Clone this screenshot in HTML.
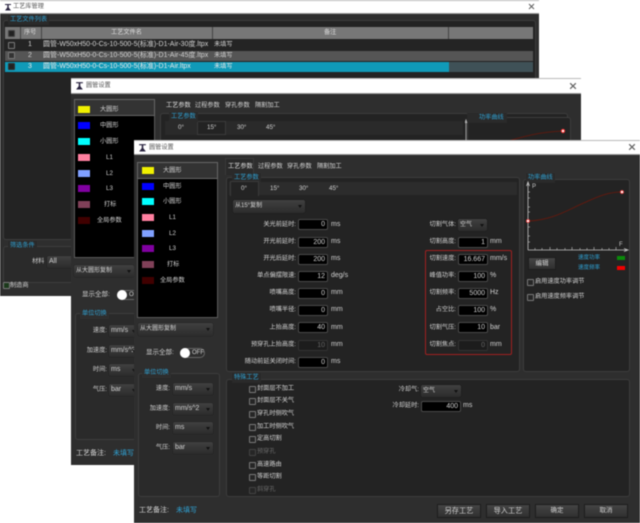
<!DOCTYPE html>
<html lang="zh">
<head>
<meta charset="utf-8">
<title>工艺库管理</title>
<style>
html,body{margin:0;padding:0;background:#fff;width:640px;height:523px;overflow:hidden}
#r{position:relative;width:640px;height:523px;overflow:hidden;background:#fff;font-family:"Liberation Sans","Noto Sans CJK SC",sans-serif;font-size:6.2px;color:#d2d2d2;filter:blur(.5px)}
#r div,#r span,#r svg{position:absolute;box-sizing:border-box}
.t{height:10px;line-height:10px;white-space:nowrap}
.u{font-size:7px}
.c{color:#2f9fd0}
.d{color:#6a6a6a}
.w{background:#2e2e2e}
.tb{background:#fff;border-top:1px solid #bbb;border-bottom:1px solid #999;color:#444}
.g{border:1px solid #3d3d3d;border-radius:3px;background:#232323}
.gt{background:#2a2a2a;color:#2f9fd0;height:10px;line-height:10px;padding:0 2px;white-space:nowrap}
.i{background:#000;border:1px solid #4a4a4a;border-radius:2px;height:11px;line-height:9px;text-align:right;padding-right:2px;color:#d2d2d2;font-size:7px}
.i.x{background:#1c1c1c;color:#666;border-color:#333}
.cb{background:linear-gradient(#404040,#2c2c2c);border-radius:2px;height:12px;line-height:12px;padding-left:2px;color:#d2d2d2;box-shadow:0 0 1px #111;white-space:nowrap;overflow:hidden;font-size:7px}
.cb.z{font-size:6px}
.cb:after{content:"";position:absolute;right:3px;top:5px;border:2px solid transparent;border-top:3px solid #111}
.b{background:linear-gradient(#444,#303030);border:1px solid #1d1d1d;height:14px;line-height:12px;text-align:center;color:#d2d2d2;font-size:7.2px}
.k{width:7px;height:7px;border:1px solid #7a7a7a;border-radius:1px;background:#262626}
.k.x{border-color:#444}
.s{width:12px;height:7px}
.l{background:#000;border:1px solid #5a5a5a}
</style>
</head>
<body>
<div id="r">

<!-- window 1 -->
<div class="w" style="left:0;top:0;width:539px;height:296px"></div>
<div class="tb" style="left:0;top:0;width:539px;height:14px"></div>
<svg style="left:4px;top:3px" width="8" height="8" viewBox="0 0 8 8"><path d="M1 1H7V2H4.7V4.500L7 7.500H1L3.300 4.500V2H1Z" fill="#2a2440"/></svg>
<span class="t" style="left:13px;top:2px;color:#555">工艺库管理</span>
<svg style="left:528px;top:3px" width="7" height="7" viewBox="0 0 7 7"><path d="M1 1L6 6M6 1L1 6" stroke="#666" stroke-width="1.1"/></svg>
<div class="g" style="left:3px;top:20px;width:533px;height:220px"></div>
<div class="gt c" style="left:8px;top:15px">工艺文件列表</div>
<div style="left:5px;top:27px;width:528px;height:12px;background:#777"></div>
<div style="left:20px;top:27px;width:1px;height:12px;background:#444"></div>
<div style="left:41px;top:27px;width:1px;height:12px;background:#444"></div>
<div style="left:212px;top:27px;width:1px;height:12px;background:#444"></div>
<div style="left:448px;top:27px;width:1px;height:12px;background:#444"></div>
<div class="k" style="left:8px;top:30px;background:#222;border-color:#444"></div>
<span class="t" style="left:24px;top:28px;color:#ddd">序号</span>
<span class="t" style="left:111px;top:28px;color:#ddd">工艺文件名</span>
<span class="t" style="left:324px;top:28px;color:#ddd">备注</span>
<div style="left:5px;top:40px;width:528px;height:10px;background:#242424"></div>
<div style="left:5px;top:51px;width:528px;height:10px;background:#555"></div>
<div style="left:5px;top:62px;width:444px;height:10px;background:#109ab8"></div>
<div style="left:449px;top:62px;width:84px;height:10px;background:#3f5157"></div>
<div class="k" style="left:8px;top:42px"></div>
<div class="k" style="left:8px;top:52px;background:#333"></div>
<div class="k" style="left:8px;top:63px;background:#222;border-color:#333"></div>
<span class="t u" style="left:28px;top:40px">1</span>
<span class="t u" style="left:28px;top:51px">2</span>
<span class="t u" style="left:28px;top:62px;color:#e8e8e8">3</span>
<span class="t u" style="left:43px;top:40px">圆管-W50xH50-0-Cs-10-500-5(标准)-D1-Air-30度.ltpx</span>
<span class="t u" style="left:43px;top:51px">圆管-W50xH50-0-Cs-10-500-5(标准)-D1-Air-45度.ltpx</span>
<span class="t u" style="left:43px;top:62px;color:#e8e8e8">圆管-W50xH50-0-Cs-10-500-5(标准)-D1-Air.ltpx</span>
<span class="t" style="left:214px;top:40px">未填写</span>
<span class="t" style="left:214px;top:51px">未填写</span>
<span class="t" style="left:214px;top:62px;color:#e8e8e8">未填写</span>
<div class="g" style="left:3px;top:246px;width:533px;height:37px;background:#2a2a2a"></div>
<div class="gt c" style="left:8px;top:241px">筛选条件</div>
<span class="t" style="left:32px;top:257px">材料</span>
<div class="cb" style="left:47px;top:256px;width:40px">All</div>
<div class="k" style="left:3px;top:282px;background:#1c3a1c"></div>
<span class="t" style="left:10px;top:281px">制造商</span>

<!-- window 2 -->
<div class="w" style="left:71px;top:78px;width:510px;height:387px"></div>
<div class="tb" style="left:71px;top:78px;width:510px;height:16px"></div>
<svg style="left:75px;top:81px" width="9" height="9" viewBox="0 0 8 8"><path d="M1 1H7V2H4.7V4.500L7 7.500H1L3.300 4.500V2H1Z" fill="#2a2440"/></svg>
<span class="t" style="left:86px;top:81px;color:#555">圆管设置</span>
<svg style="left:569px;top:82px" width="8" height="8" viewBox="0 0 7 7"><path d="M1 1L6 6M6 1L1 6" stroke="#666" stroke-width="1.1"/></svg>
<div class="l" style="left:74px;top:99px;width:81px;height:159px"></div>
<div style="left:74px;top:99px;width:81px;height:17px;background:#333;border:1px solid #666"></div>
<div class="s" style="left:78px;top:106px;background:#f0f000"></div>
<div class="s" style="left:78px;top:122px;background:#0000ff"></div>
<div class="s" style="left:78px;top:138px;background:#00ffff"></div>
<div class="s" style="left:78px;top:154px;background:#ff80a0"></div>
<div class="s" style="left:78px;top:170px;background:#80a0ff"></div>
<div class="s" style="left:78px;top:185px;background:#8000a0"></div>
<div class="s" style="left:78px;top:201px;background:#804058"></div>
<div class="s" style="left:78px;top:217px;background:#400000"></div>
<span class="t" style="left:100px;top:105px">大圆形</span>
<span class="t" style="left:100px;top:121px">中圆形</span>
<span class="t" style="left:100px;top:137px">小圆形</span>
<span class="t" style="left:106px;top:153px">L1</span>
<span class="t" style="left:106px;top:169px">L2</span>
<span class="t" style="left:106px;top:184px">L3</span>
<span class="t" style="left:104px;top:200px">打标</span>
<span class="t" style="left:97px;top:216px">全局参数</span>
<div class="cb z" style="left:74px;top:265px;width:60px">从大圆形复制</div>
<span class="t" style="left:82px;top:290px;font-size:6.500px">显示全部:</span>
<div style="left:117px;top:290px;width:30px;height:10px;border:1px solid #666;border-radius:5px"></div>
<div style="left:117px;top:290px;width:10px;height:10px;background:#fff;border-radius:50%"></div>
<span class="t" style="left:129px;top:290px">OFF</span>
<div class="g" style="left:75px;top:313px;width:70px;height:127px;background:#2a2a2a"></div>
<div class="gt c" style="left:80px;top:309px;background:#2e2e2e">单位切换</div>
<span class="t" style="right:533px;top:326px">速度:</span>
<span class="t" style="right:533px;top:346px">加速度:</span>
<span class="t" style="right:533px;top:365px">时间:</span>
<span class="t" style="right:533px;top:385px">气压:</span>
<div class="cb" style="left:109px;top:325px;width:30px">mm/s</div>
<div class="cb" style="left:109px;top:345px;width:30px">mm/s^2</div>
<div class="cb" style="left:109px;top:364px;width:30px">ms</div>
<div class="cb" style="left:109px;top:384px;width:30px">bar</div>
<span class="t" style="left:76px;top:449px;font-size:7px">工艺备注:</span>
<span class="t c" style="left:113px;top:449px;font-size:7px">未填写</span>
<span class="t" style="left:166px;top:101px;color:#ddd">工艺参数</span>
<span class="t" style="left:195px;top:101px">过程参数</span>
<span class="t" style="left:225px;top:101px">穿孔参数</span>
<span class="t" style="left:255px;top:101px">隔割加工</span>
<div style="left:160px;top:113px;width:408px;height:400px;background:#232323;border:1px solid #3d3d3d;border-radius:3px"></div>
<div style="left:165px;top:121px;width:298px;height:14px;background:#2a2a2a"></div>
<div style="left:197px;top:121px;width:29px;height:14px;background:#232323;border:1px solid #3a3a3a"></div>
<div class="gt c" style="left:169px;top:112px;background:#2a2a2a">工艺参数</div>
<span class="t" style="left:178px;top:123px">0°</span>
<span class="t" style="left:207px;top:123px">15°</span>
<span class="t" style="left:237px;top:123px">30°</span>
<span class="t" style="left:266px;top:123px">45°</span>
<div style="left:467px;top:117px;width:104px;height:300px;border:1px solid #3d3d3d;border-radius:3px;background:#232323"></div>
<div class="gt c" style="left:467px;top:113px;background:#2a2a2a;padding:0 3px 0 12px">功率曲线</div>
<svg style="left:465px;top:118px" width="110" height="24" viewBox="0 0 110 24"><path d="M1 24V4M0 5L1 2L2 5" stroke="#c0c0c0" stroke-width=".8" fill="none"/><path d="M40 24C60 18 75 14 98 13" stroke="#5a1a10" stroke-width="1" fill="none"/><circle cx="98" cy="13" r="1.600" fill="#fff" stroke="#f33"/></svg>

<!-- window 3 -->
<div class="w" style="left:134px;top:140px;width:506px;height:383px"></div>
<div class="tb" style="left:134px;top:140px;width:506px;height:15px"></div>
<svg style="left:138px;top:143px" width="9" height="9" viewBox="0 0 8 8"><path d="M1 1H7V2H4.7V4.500L7 7.500H1L3.300 4.500V2H1Z" fill="#2a2440"/></svg>
<span class="t" style="left:149px;top:143px;color:#555">圆管设置</span>
<svg style="left:628px;top:143px" width="8" height="8" viewBox="0 0 7 7"><path d="M1 1L6 6M6 1L1 6" stroke="#666" stroke-width="1.1"/></svg>

<div class="l" style="left:137px;top:162px;width:81px;height:156px"></div>
<div style="left:137px;top:162px;width:81px;height:17px;background:#333;border:1px solid #666"></div>
<div class="s" style="left:142px;top:167px;background:#f0f000"></div>
<div class="s" style="left:142px;top:183px;background:#0000ff"></div>
<div class="s" style="left:142px;top:198px;background:#00ffff"></div>
<div class="s" style="left:142px;top:214px;background:#ff80a0"></div>
<div class="s" style="left:142px;top:230px;background:#80a0ff"></div>
<div class="s" style="left:142px;top:245px;background:#8000a0"></div>
<div class="s" style="left:142px;top:261px;background:#804058"></div>
<div class="s" style="left:142px;top:277px;background:#400000"></div>
<span class="t" style="left:163px;top:166px">大圆形</span>
<span class="t" style="left:163px;top:182px">中圆形</span>
<span class="t" style="left:163px;top:197px">小圆形</span>
<span class="t" style="left:169px;top:213px">L1</span>
<span class="t" style="left:169px;top:229px">L2</span>
<span class="t" style="left:169px;top:244px">L3</span>
<span class="t" style="left:167px;top:260px">打标</span>
<span class="t" style="left:160px;top:276px">全局参数</span>

<div class="cb z" style="left:138px;top:323px;width:75px;height:13px">从大圆形复制</div>
<span class="t" style="left:146px;top:348px;font-size:6.500px">显示全部:</span>
<div style="left:180px;top:348px;width:25px;height:10px;border:1px solid #666;border-radius:5px"></div>
<div style="left:180px;top:348px;width:10px;height:10px;background:#fff;border-radius:50%"></div>
<span class="t" style="left:192px;top:348px;font-size:6px">OFF</span>

<div class="g" style="left:138px;top:373px;width:82px;height:124px;background:#2a2a2a"></div>
<div class="gt c" style="left:142px;top:368px;background:#2e2e2e">单位切换</div>
<span class="t" style="right:470px;top:384px">速度:</span>
<span class="t" style="right:470px;top:404px">加速度:</span>
<span class="t" style="right:470px;top:423px">时间:</span>
<span class="t" style="right:470px;top:443px">气压:</span>
<div class="cb" style="left:173px;top:383px;width:40px">mm/s</div>
<div class="cb" style="left:173px;top:403px;width:40px">mm/s^2</div>
<div class="cb" style="left:173px;top:422px;width:40px">ms</div>
<div class="cb" style="left:173px;top:442px;width:40px">bar</div>
<span class="t" style="left:139px;top:506px;font-size:7px">工艺备注:</span>
<span class="t c" style="left:176px;top:506px;font-size:7px">未填写</span>

<span class="t" style="left:258px;top:162px">过程参数</span>
<span class="t" style="left:287px;top:162px">穿孔参数</span>
<span class="t" style="left:317px;top:162px">隔割加工</span>
<div style="left:225px;top:158px;width:29px;height:17px;background:#2a2a2a;border:1px solid #3a3a3a;border-bottom:0"></div>
<span class="t" style="left:228px;top:162px;color:#ddd">工艺参数</span>
<div class="g" style="left:226px;top:177px;width:294px;height:195px"></div>
<div class="gt c" style="left:232px;top:173px;background:#2a2a2a">工艺参数</div>
<div style="left:229px;top:182px;width:288px;height:13px;background:#2c2c2c"></div>
<div style="left:230px;top:181px;width:29px;height:15px;background:#232323;border:1px solid #3a3a3a;border-bottom:0"></div>
<span class="t" style="left:241px;top:184px">0°</span>
<span class="t" style="left:270px;top:184px">15°</span>
<span class="t" style="left:299px;top:184px">30°</span>
<span class="t" style="left:329px;top:184px">45°</span>
<div class="cb z" style="left:233px;top:200px;width:72px;height:13px">从15°复制</div>

<span class="t" style="right:344px;top:220px">关光前延时:</span>
<span class="t" style="right:344px;top:237px">开光前延时:</span>
<span class="t" style="right:344px;top:254px">开光后延时:</span>
<span class="t" style="right:344px;top:271px">单点偏摆限速:</span>
<span class="t" style="right:344px;top:288px">喷嘴高度:</span>
<span class="t" style="right:344px;top:305px">喷嘴半径:</span>
<span class="t" style="right:344px;top:323px">上抬高度:</span>
<span class="t" style="right:344px;top:340px">预穿孔上抬高度:</span>
<span class="t" style="right:344px;top:357px">随动前延关闭时间:</span>
<div class="i" style="left:298px;top:219px;width:30px">0</div>
<div class="i" style="left:298px;top:237px;width:30px">200</div>
<div class="i" style="left:298px;top:254px;width:30px">200</div>
<div class="i" style="left:298px;top:271px;width:30px">12</div>
<div class="i" style="left:298px;top:288px;width:30px">0</div>
<div class="i" style="left:298px;top:305px;width:30px">0</div>
<div class="i" style="left:298px;top:322px;width:30px">40</div>
<div class="i x" style="left:298px;top:340px;width:30px">10</div>
<div class="i" style="left:298px;top:357px;width:30px">0</div>
<span class="t u" style="left:331px;top:220px">ms</span>
<span class="t u" style="left:331px;top:237px">ms</span>
<span class="t u" style="left:331px;top:254px">ms</span>
<span class="t u" style="left:331px;top:271px">deg/s</span>
<span class="t u" style="left:331px;top:288px">mm</span>
<span class="t u" style="left:331px;top:305px">mm</span>
<span class="t u" style="left:331px;top:323px">mm</span>
<span class="t u" style="left:331px;top:340px">mm</span>
<span class="t u" style="left:331px;top:357px">ms</span>

<span class="t" style="right:184px;top:220px">切割气体:</span>
<span class="t" style="right:184px;top:237px">切割高度:</span>
<span class="t" style="right:184px;top:254px">切割速度:</span>
<span class="t" style="right:184px;top:271px">峰值功率:</span>
<span class="t" style="right:184px;top:288px">切割频率:</span>
<span class="t" style="right:184px;top:305px">占空比:</span>
<span class="t" style="right:184px;top:323px">切割气压:</span>
<span class="t" style="right:184px;top:340px">切割焦点:</span>
<div class="cb z" style="left:458px;top:219px;width:29px">空气</div>
<div class="i" style="left:458px;top:237px;width:30px">1</div>
<div class="i" style="left:458px;top:254px;width:30px">16.667</div>
<div class="i" style="left:458px;top:271px;width:30px">100</div>
<div class="i" style="left:458px;top:288px;width:30px">5000</div>
<div class="i" style="left:458px;top:305px;width:30px">100</div>
<div class="i" style="left:458px;top:322px;width:30px">10</div>
<div class="i x" style="left:458px;top:340px;width:30px">0</div>
<span class="t u" style="left:490px;top:237px">mm</span>
<span class="t u" style="left:490px;top:254px">mm/s</span>
<span class="t u" style="left:490px;top:271px">%</span>
<span class="t u" style="left:490px;top:288px">Hz</span>
<span class="t u" style="left:490px;top:305px">%</span>
<span class="t u" style="left:490px;top:323px">bar</span>
<span class="t u" style="left:490px;top:340px">mm</span>
<div style="left:425px;top:250px;width:87px;height:105px;border:1px solid #a02020;border-radius:2px"></div>

<div class="g" style="left:523px;top:179px;width:107px;height:193px"></div>
<div class="gt c" style="left:526px;top:173px;background:#2a2a2a">功率曲线</div>
<svg style="left:524px;top:180px" width="106" height="74" viewBox="0 0 106 74">
<path d="M4 70V3M2.500 6L4 2L5.500 6M4 70H103M100 68.500L104 70L100 71.500" stroke="#c4c4c4" stroke-width=".8" fill="none"/>
<path d="M4 12H6M4 18H6M4 27H6M4 32H6M4 41H6M4 47H6M4 56H6M4 62H6M11 70V68M18 70V68M26 70V67M33 70V68M41 70V68M48 70V67M56 70V68M63 70V68M70 70V67M78 70V68M85 70V68M92 70V67" stroke="#b0b0b0" stroke-width=".7"/>
<path d="M4 41C30 40 45 29 62 22C75 16 85 12 98 12" stroke="#5e1a10" stroke-width="1" fill="none"/>
<circle cx="4" cy="41" r="1.500" fill="#fff" stroke="#f44" stroke-width=".8"/>
<circle cx="98" cy="12" r="1.500" fill="#fff" stroke="#f44" stroke-width=".8"/>
<text x="8" y="8" font-size="6" fill="#c8c8c8" font-family="Liberation Sans">P</text>
<text x="95" y="66" font-size="6" fill="#c8c8c8" font-family="Liberation Sans">F</text>
</svg>
<div class="b" style="left:528px;top:257px;width:28px;height:13px;font-size:6.500px">编辑</div>
<span class="t c" style="left:578px;top:253px;font-size:5.500px">速度功率</span>
<span class="t c" style="left:578px;top:263px;font-size:5.500px">速度频率</span>
<div style="left:617px;top:256px;width:8px;height:4px;background:#0a8a0a"></div>
<div style="left:617px;top:266px;width:8px;height:4px;background:#f00000"></div>
<div class="k" style="left:527px;top:279px"></div>
<span class="t" style="left:535px;top:277px">启用速度功率调节</span>
<div class="k" style="left:527px;top:294px"></div>
<span class="t" style="left:535px;top:292px">启用速度频率调节</span>

<div class="g" style="left:226px;top:379px;width:404px;height:118px"></div>
<div class="gt c" style="left:232px;top:373px;background:#2a2a2a">特殊工艺</div>
<div class="k" style="left:249px;top:386px"></div><span class="t" style="left:257px;top:384px">封面层不加工</span>
<div class="k" style="left:249px;top:398px"></div><span class="t" style="left:257px;top:396px">封面层不关气</span>
<div class="k" style="left:249px;top:411px"></div><span class="t" style="left:257px;top:409px">穿孔时侧吹气</span>
<div class="k" style="left:249px;top:424px"></div><span class="t" style="left:257px;top:422px">加工时侧吹气</span>
<div class="k" style="left:249px;top:436px"></div><span class="t" style="left:257px;top:434px">定高切割</span>
<div class="k x" style="left:249px;top:449px"></div><span class="t d" style="left:257px;top:447px">预穿孔</span>
<div class="k" style="left:249px;top:462px"></div><span class="t" style="left:257px;top:460px">高速路由</span>
<div class="k" style="left:249px;top:474px"></div><span class="t" style="left:257px;top:472px">等距切割</span>
<div class="k x" style="left:249px;top:487px"></div><span class="t d" style="left:257px;top:485px">斜穿孔</span>
<span class="t" style="right:221px;top:385px">冷却气:</span>
<span class="t" style="right:221px;top:401px">冷却延时:</span>
<div class="cb z" style="left:421px;top:385px;width:40px">空气</div>
<div class="i" style="left:421px;top:401px;width:40px">400</div>
<span class="t u" style="left:463px;top:401px">ms</span>

<div class="b" style="left:437px;top:504px;width:44px">另存工艺</div>
<div class="b" style="left:486px;top:504px;width:44px">导入工艺</div>
<div class="b" style="left:535px;top:504px;width:44px;font-size:6.500px">确定</div>
<div class="b" style="left:584px;top:504px;width:44px;font-size:6.500px">取消</div>

</div>
</body>
</html>
